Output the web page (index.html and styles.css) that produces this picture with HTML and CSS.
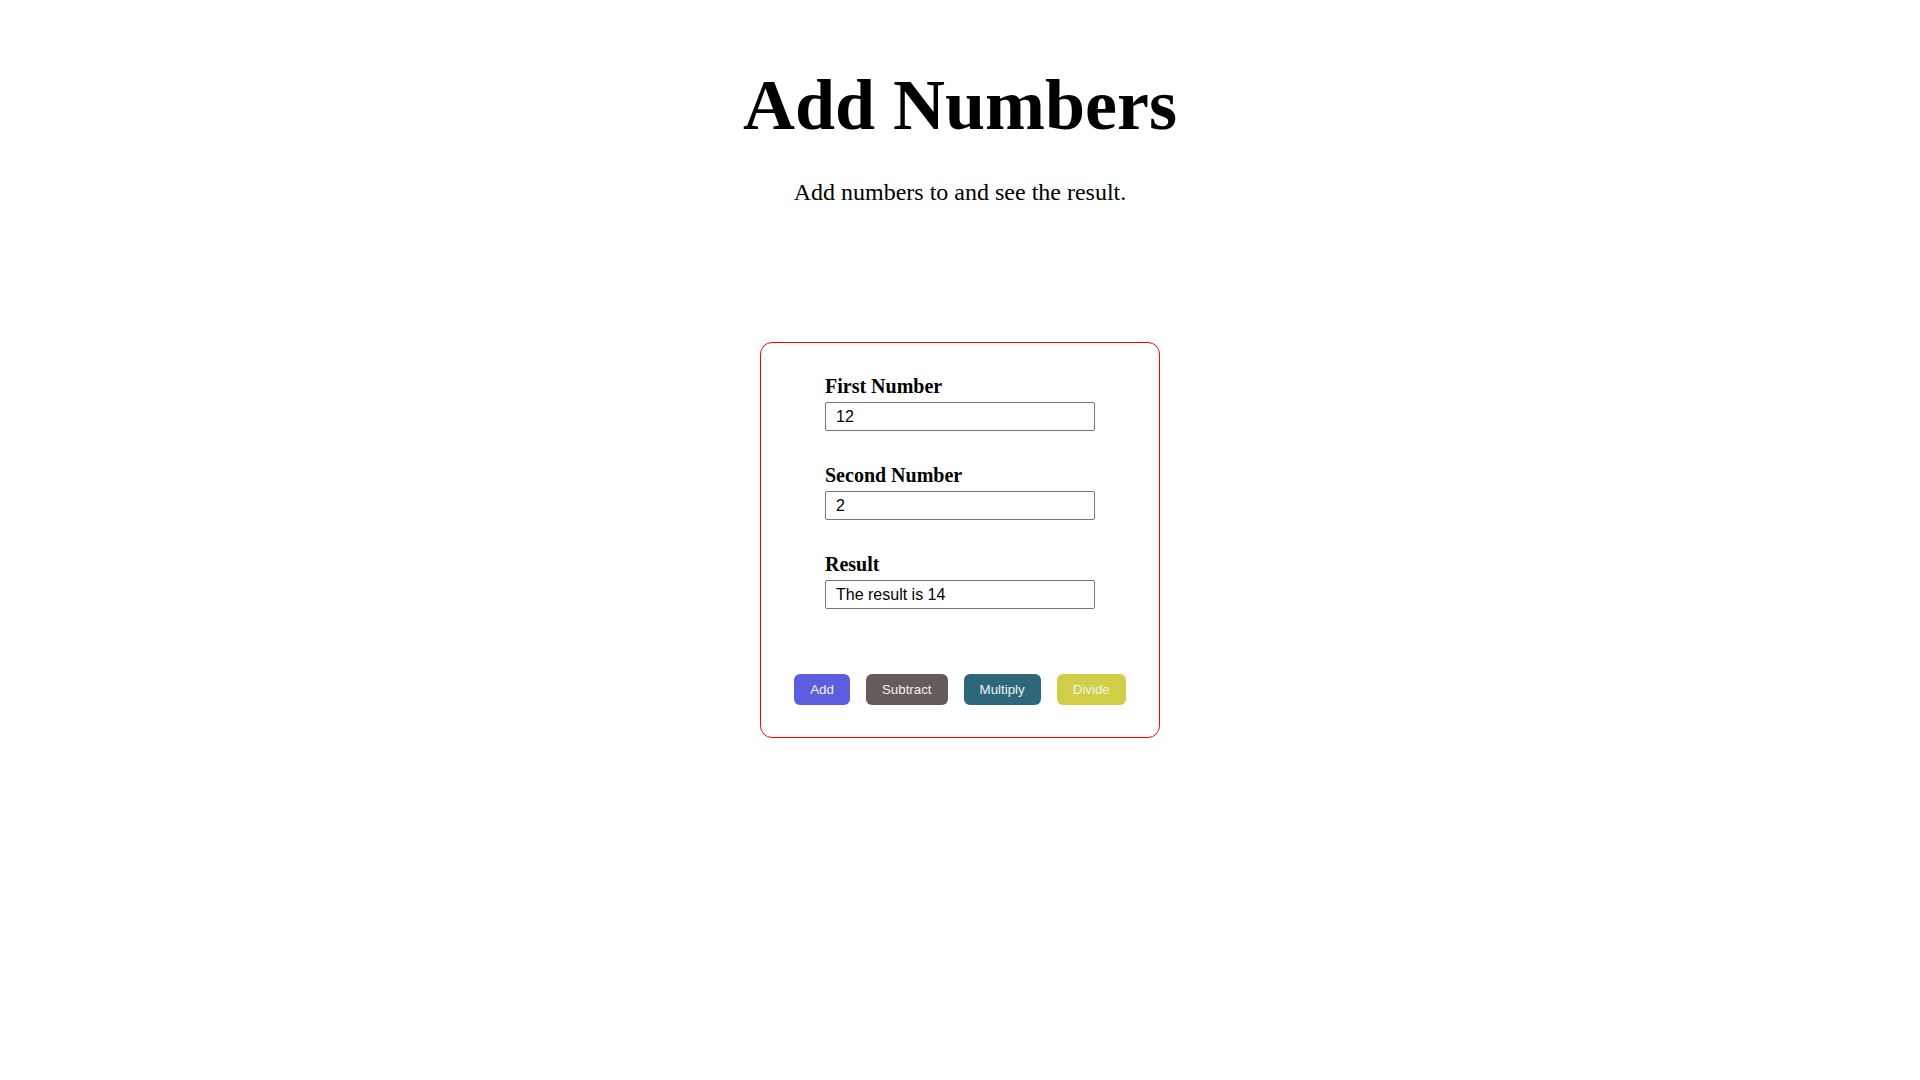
FILE: index.html
```html
<!DOCTYPE html>
<html lang="en">
<head>
<meta charset="utf-8">
<title>Add Numbers</title>
<link rel="stylesheet" href="styles.css">
</head>
<body>
<header class="page-header">
  <h1 class="title">Add Numbers</h1>
  <p class="subtitle">Add numbers to and see the result.</p>
</header>
<main class="calc-card">
  <div class="fields">
    <div class="field">
      <label class="field-label" for="first">First Number</label>
      <input class="field-input" id="first" type="text" value="12">
    </div>
    <div class="field">
      <label class="field-label" for="second">Second Number</label>
      <input class="field-input" id="second" type="text" value="2">
    </div>
    <div class="field">
      <label class="field-label" for="result">Result</label>
      <input class="field-input" id="result" type="text" value="The result is 14">
    </div>
  </div>
  <div class="actions">
    <button class="btn btn-add">Add</button>
    <button class="btn btn-subtract">Subtract</button>
    <button class="btn btn-multiply">Multiply</button>
    <button class="btn btn-divide">Divide</button>
  </div>
</main>
</body>
</html>
```
FILE: styles.css
```css
html, body {
  margin: 0;
  padding: 0;
  background: #ffffff;
}

body {
  font-family: "Liberation Serif", "Times New Roman", serif;
  color: #000;
  display: flex;
  flex-direction: column;
  align-items: center;
  padding-top: 64px;
}

.page-header {
  text-align: center;
}

.title {
  margin: 0;
  font-size: 72px;
  font-weight: bold;
}

.subtitle {
  margin: 32px 0 0;
  font-size: 24px;
}

.calc-card {
  margin-top: 136px;
  width: 400px;
  box-sizing: border-box;
  border: 1px solid #ff0000;
  border-radius: 12px;
  padding: 32px 0 32px;
  display: flex;
  flex-direction: column;
  align-items: center;
}

.fields {
  display: flex;
  flex-direction: column;
  gap: 33px;
  width: 270px;
}

.field {
  display: flex;
  flex-direction: column;
}

.field-label {
  font-size: 20px;
  font-weight: bold;
  margin-bottom: 4px;
}

.field-input {
  box-sizing: border-box;
  width: 270px;
  height: 29px;
  padding: 0 10px;
  border: 1px solid #767676;
  border-radius: 2px;
  font-family: "Liberation Sans", Arial, sans-serif;
  font-size: 16px;
  color: #000;
  background: #fff;
}

.actions {
  display: flex;
  gap: 16px;
  margin-top: 65px;
}

.btn {
  font-family: "Liberation Sans", Arial, sans-serif;
  font-size: 13.333px;
  line-height: normal;
  padding: 8px 16px;
  border: none;
  border-radius: 6px;
  color: #f2f2f2;
  cursor: pointer;
}

.btn-add { background: #5d5de0; }
.btn-subtract { background: #655b59; }
.btn-multiply { background: #2c6879; }
.btn-divide { background: #d1cf48; }
```
